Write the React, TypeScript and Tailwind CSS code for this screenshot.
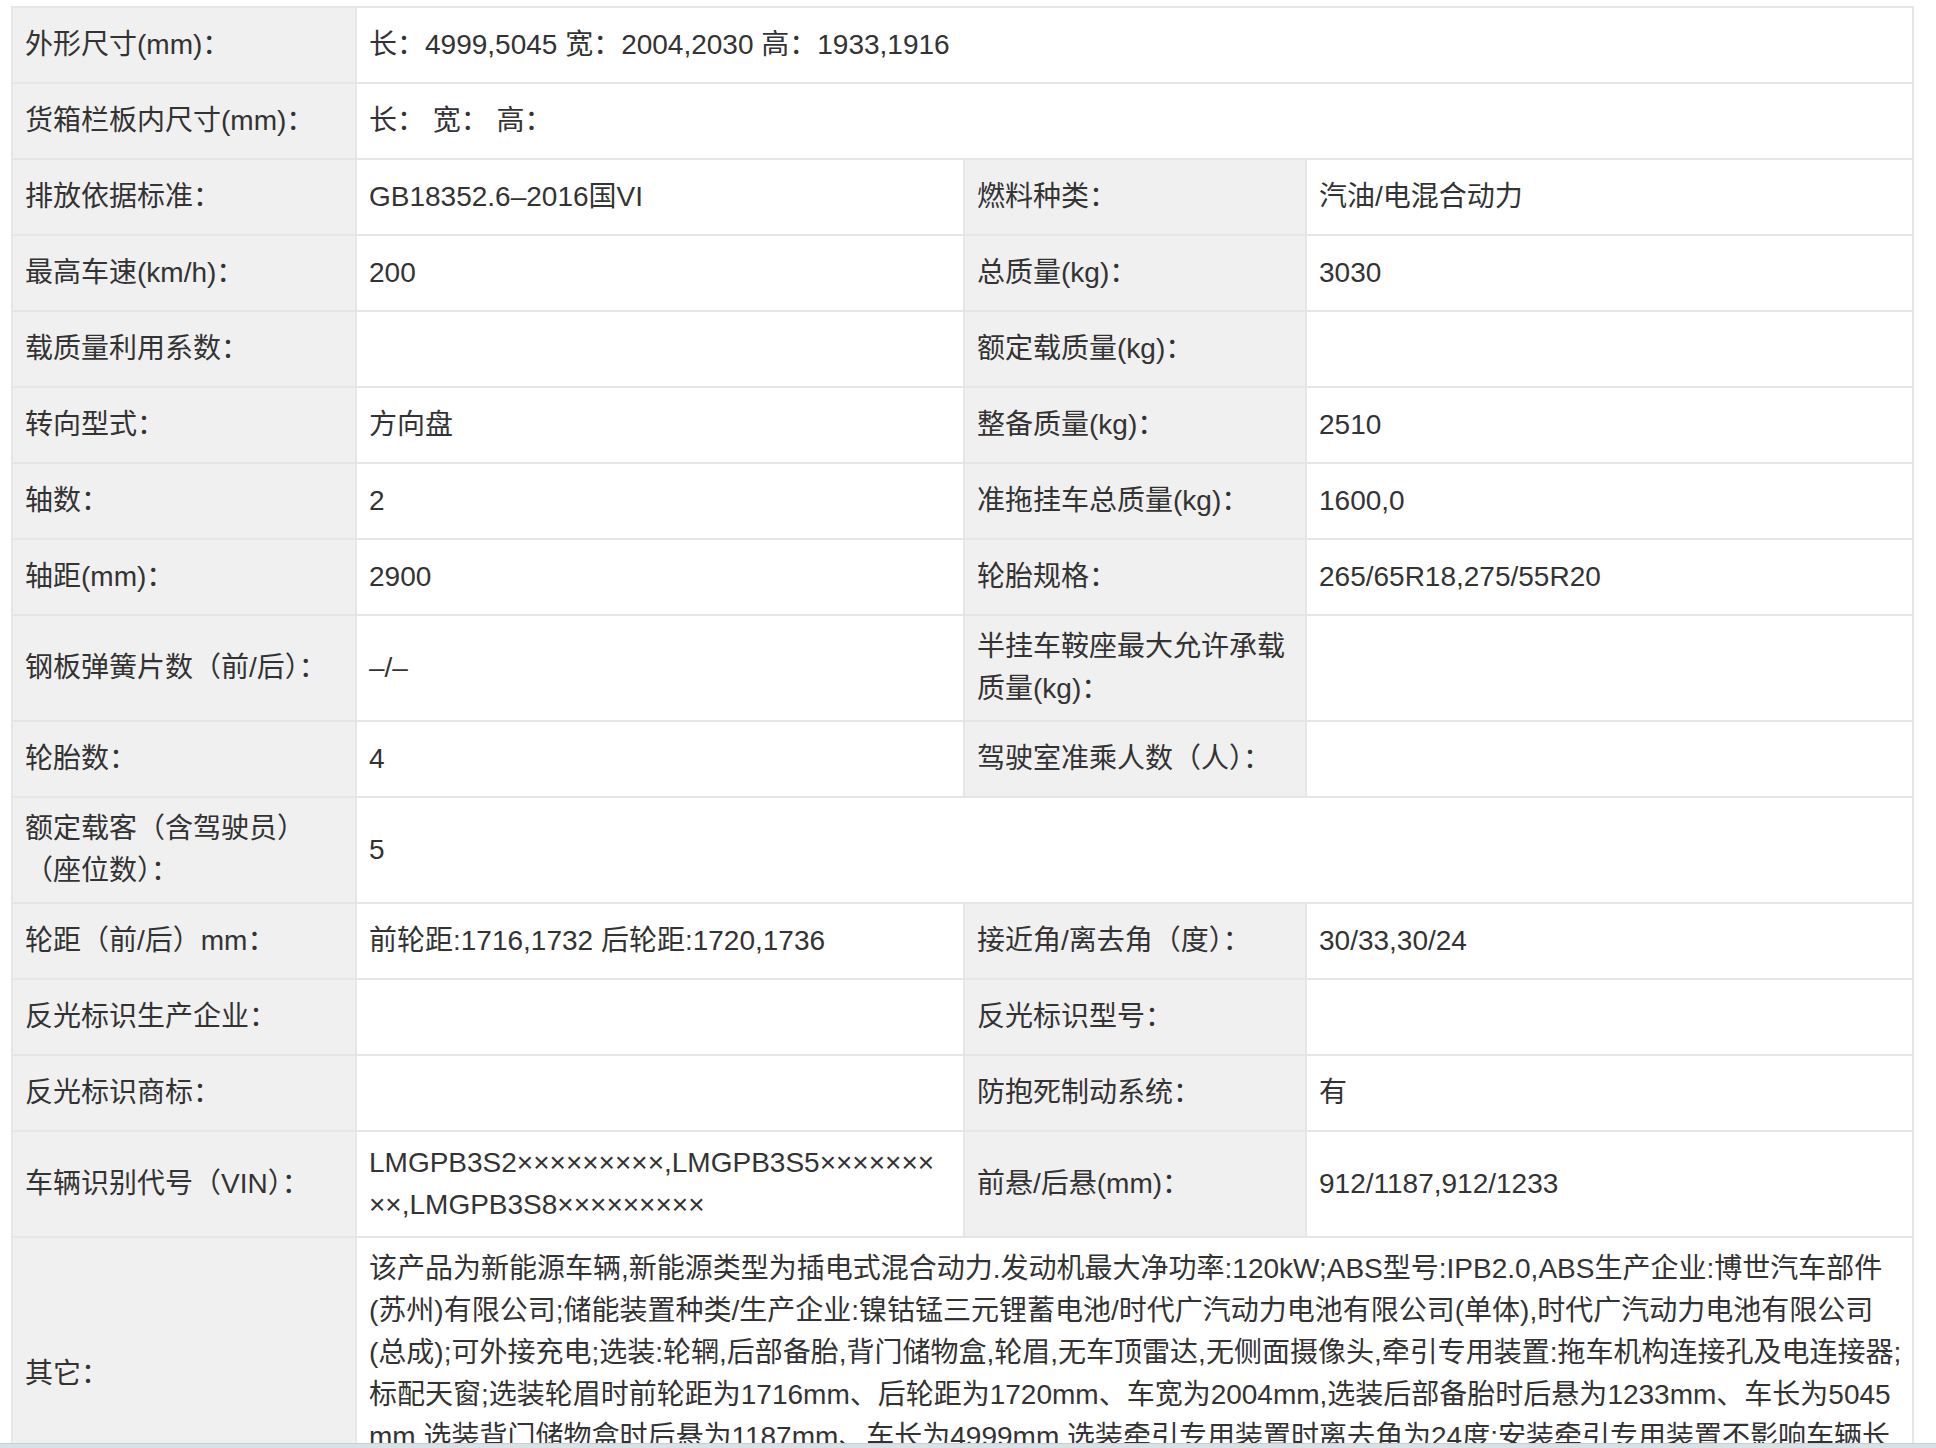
import React from 'react';

type Cell = { label: React.ReactNode; value?: React.ReactNode };

const labelCls =
  'border-2 border-[#e6e6e6] bg-[#f0f0f0] px-3 py-[10px] align-middle text-left font-normal';
const valueCls = 'border-2 border-[#e6e6e6] bg-white px-3 py-[10px] align-middle text-left';

// rows with two pairs side by side
const pairRows: [Cell, Cell][] = [
  [
    { label: '排放依据标准：', value: 'GB18352.6–2016国VI' },
    { label: '燃料种类：', value: '汽油/电混合动力' },
  ],
  [
    { label: '最高车速(km/h)：', value: '200' },
    { label: '总质量(kg)：', value: '3030' },
  ],
  [{ label: '载质量利用系数：' }, { label: '额定载质量(kg)：' }],
  [
    { label: '转向型式：', value: '方向盘' },
    { label: '整备质量(kg)：', value: '2510' },
  ],
  [
    { label: '轴数：', value: '2' },
    { label: '准拖挂车总质量(kg)：', value: '1600,0' },
  ],
  [
    { label: '轴距(mm)：', value: '2900' },
    { label: '轮胎规格：', value: '265/65R18,275/55R20' },
  ],
  [
    { label: '钢板弹簧片数（前/后）：', value: '–/–' },
    {
      label: (
        <>
          半挂车鞍座最大允许承载
          <br />
          质量(kg)：
        </>
      ),
    },
  ],
  [{ label: '轮胎数：', value: '4' }, { label: '驾驶室准乘人数（人）：' }],
];

const pairRows2: [Cell, Cell][] = [
  [
    { label: '轮距（前/后）mm：', value: '前轮距:1716,1732 后轮距:1720,1736' },
    { label: '接近角/离去角（度）：', value: '30/33,30/24' },
  ],
  [{ label: '反光标识生产企业：' }, { label: '反光标识型号：' }],
  [{ label: '反光标识商标：' }, { label: '防抱死制动系统：', value: '有' }],
  [
    {
      label: '车辆识别代号（VIN）：',
      value: (
        <>
          LMGPB3S2×××××××××,LMGPB3S5×××××××
          <br />
          ××,LMGPB3S8×××××××××
        </>
      ),
    },
    { label: '前悬/后悬(mm)：', value: '912/1187,912/1233' },
  ],
];

const otherLines = [
  '该产品为新能源车辆,新能源类型为插电式混合动力.发动机最大净功率:120kW;ABS型号:IPB2.0,ABS生产企业:博世汽车部件',
  '(苏州)有限公司;储能装置种类/生产企业:镍钴锰三元锂蓄电池/时代广汽动力电池有限公司(单体),时代广汽动力电池有限公司',
  '(总成);可外接充电;选装:轮辋,后部备胎,背门储物盒,轮眉,无车顶雷达,无侧面摄像头,牵引专用装置:拖车机构连接孔及电连接器;',
  '标配天窗;选装轮眉时前轮距为1716mm、后轮距为1720mm、车宽为2004mm,选装后部备胎时后悬为1233mm、车长为5045',
  'mm,选装背门储物盒时后悬为1187mm、车长为4999mm,选装牵引专用装置时离去角为24度;安装牵引专用装置不影响车辆长',
];

function PairRow({ row }: { row: [Cell, Cell] }) {
  return (
    <tr className="h-[76px]">
      <th className={labelCls}>{row[0].label}</th>
      <td className={valueCls}>{row[0].value}</td>
      <th className={labelCls}>{row[1].label}</th>
      <td className={valueCls}>{row[1].value}</td>
    </tr>
  );
}

export default function App() {
  return (
    <div
      className="flex h-[1448px] w-[1936px] flex-col overflow-hidden bg-white text-[28px] leading-[42px] text-[#333333]"
      style={{ fontFamily: '"Liberation Sans", "Noto Sans CJK SC", sans-serif' }}
    >
      <div className="h-[1443px] overflow-hidden pl-[11px] pt-[6px]">
        <table className="w-[1901px] table-fixed border-collapse">
          <colgroup>
            <col className="w-[344px]" />
            <col className="w-[608px]" />
            <col className="w-[342px]" />
            <col className="w-[607px]" />
          </colgroup>
          <tbody>
            <tr className="h-[76px]">
              <th className={labelCls}>外形尺寸(mm)：</th>
              <td className={valueCls} colSpan={3}>
                长：4999,5045 宽：2004,2030 高：1933,1916
              </td>
            </tr>
            <tr className="h-[76px]">
              <th className={labelCls}>货箱栏板内尺寸(mm)：</th>
              <td className={valueCls} colSpan={3}>
                长： 宽： 高：
              </td>
            </tr>
            {pairRows.map((r, i) => (
              <PairRow key={i} row={r} />
            ))}
            <tr className="h-[76px]">
              <th className={labelCls}>
                额定载客（含驾驶员）
                <br />
                （座位数）：
              </th>
              <td className={valueCls} colSpan={3}>
                5
              </td>
            </tr>
            {pairRows2.map((r, i) => (
              <PairRow key={i} row={r} />
            ))}
            <tr className="h-[274px]">
              <th className={labelCls}>其它：</th>
              <td className={`${valueCls} !align-top whitespace-nowrap`} colSpan={3}>
                {otherLines.map((l, i) => (
                  <div key={i}>{l}</div>
                ))}
              </td>
            </tr>
          </tbody>
        </table>
      </div>
      <div className="h-[5px] border-t border-[#c2d2d6] bg-[#d6e2e5]" />
    </div>
  );
}
